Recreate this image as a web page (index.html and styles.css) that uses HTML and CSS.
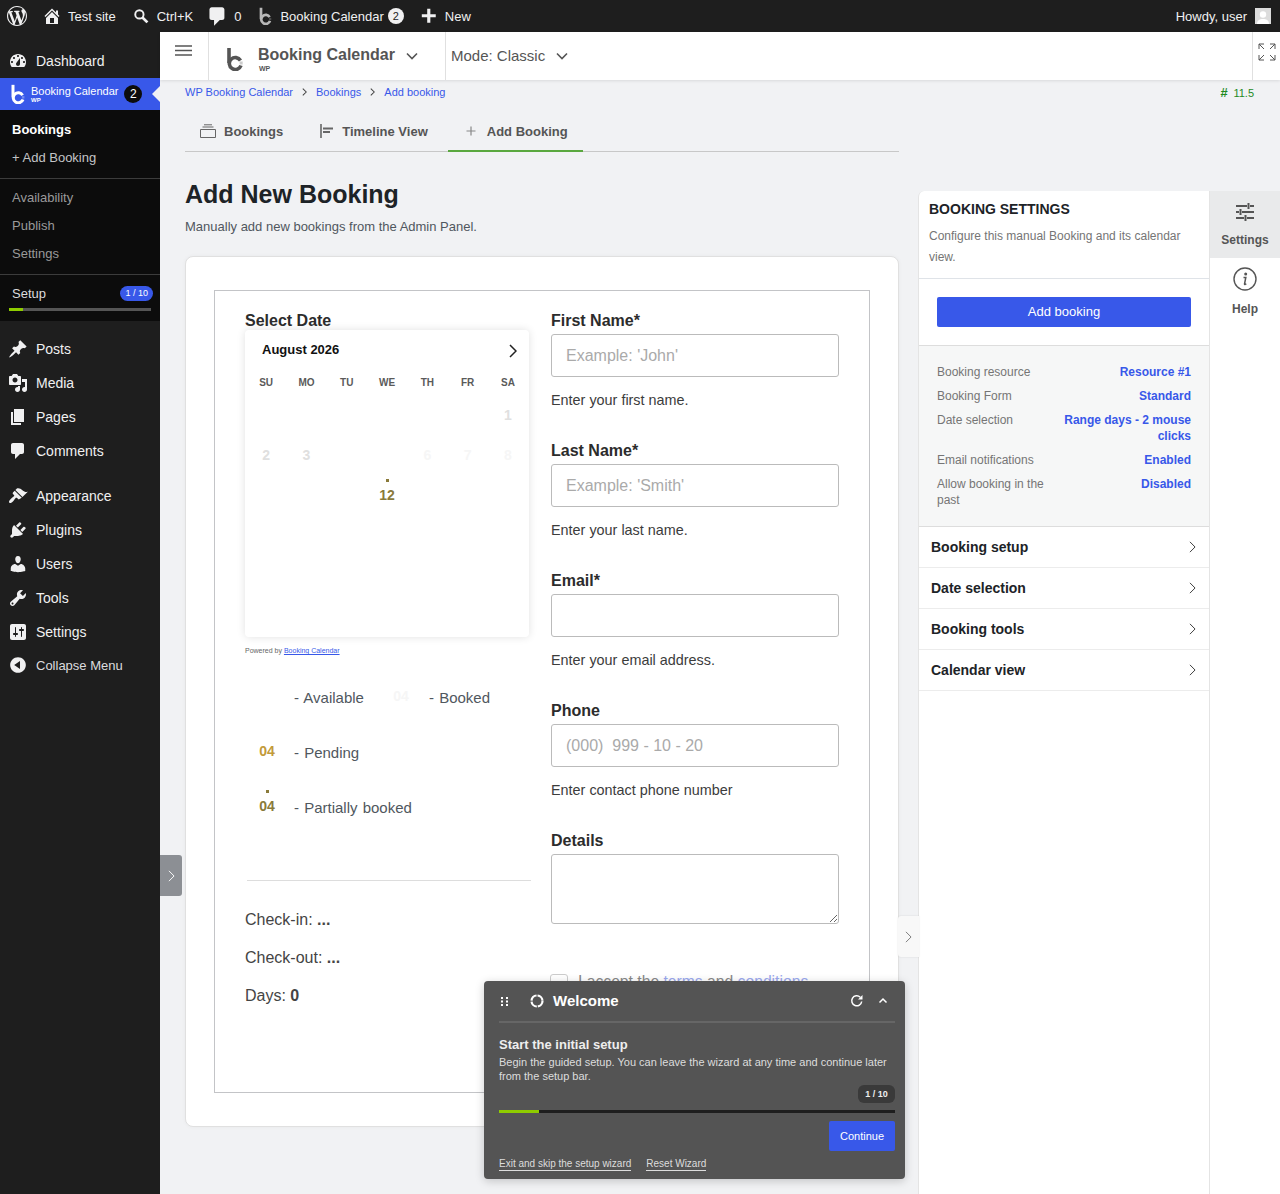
FILE: index.html
```html
<!DOCTYPE html>
<html lang="en">
  <head>
    <meta charset="UTF-8" />
    <meta name="viewport" content="width=device-width, initial-scale=1.0" />
    <title>Add New Booking</title>
    <link rel="stylesheet" href="styles.css">
  </head>
  <body>
    <!-- Shared icons -->
    <svg class="icon-defs" aria-hidden="true">
      <symbol id="i-bc" viewBox="0 0 16 24">
        <path d="M2 1V16" fill="none" stroke="currentColor" stroke-width="3.6"/>
        <path d="M14 18.500A6 6 0 1 1 13.500 13.500" fill="none" stroke="currentColor" stroke-width="3.6"/>
        <path d="M14.200 14.500v3" fill="none" stroke="currentColor" stroke-width="3" opacity="0.3"/>
      </symbol>
      <symbol id="i-comment" viewBox="0 0 20 20">
        <path d="M5 2h9c1.1 0 2 .9 2 2v7c0 1.1-.9 2-2 2h-2l-5 5v-5H5c-1.1 0-2-.9-2-2V4c0-1.1.9-2 2-2z"/>
      </symbol>
      <symbol id="i-right" viewBox="0 0 8 14">
        <path d="M1 1l6 6-6 6" fill="none" stroke="currentColor"/>
      </symbol>
      <symbol id="i-down" viewBox="0 0 12 8">
        <path d="M1 1.500l5 5 5-5" fill="none" stroke="currentColor" stroke-width="1.6"/>
      </symbol>
    </svg>

    <!-- Admin bar -->
    <header class="admin-bar">
      <div class="bar-group">
        <svg class="bar-logo" viewBox="0 0 20 20"><path d="M20 10c0-5.51-4.49-10-10-10C4.48 0 0 4.49 0 10c0 5.52 4.48 10 10 10 5.51 0 10-4.48 10-10zM7.78 15.37L4.37 6.22c.55-.02 1.17-.08 1.17-.08.5-.06.44-1.13-.06-1.11 0 0-1.45.11-2.37.11-.18 0-.37 0-.58-.01C4.12 2.69 6.87 1.02 10 1.02c2.33 0 4.45.87 6.05 2.34-.68-.11-1.65.39-1.65 1.58 0 .74.45 1.36.9 2.1.35.61.55 1.36.55 2.46 0 1.49-1.4 5-1.4 5l-3.03-8.37c.54-.02.82-.17.82-.17.5-.05.44-1.25-.06-1.22 0 0-1.44.12-2.38.12-.87 0-2.33-.12-2.33-.12-.5-.03-.56 1.2-.06 1.22l.92.08 1.26 3.41zM17.41 10c.24-.64.74-1.87.43-4.25.7 1.29 1.05 2.71 1.05 4.25 0 3.29-1.73 6.24-4.4 7.78.97-2.59 1.94-5.2 2.92-7.78zM6.1 18.09C3.12 16.65 1.11 13.53 1.11 10c0-1.3.23-2.48.72-3.59C3.25 10.3 4.67 14.2 6.1 18.09zm4.03-6.63l2.58 6.98c-.86.29-1.76.45-2.71.45-.79 0-1.57-.11-2.29-.33.81-2.38 1.62-4.74 2.42-7.1z"/></svg>
        <span class="bar-item">
          <svg class="bar-icon" viewBox="0 0 20 20"><path d="M16 8.5l1.53 1.53-1.06 1.06L10 4.62l-6.47 6.47-1.06-1.06L10 2.500l4 4v-2h2v4zm-6-2.46l6 5.99V18H4v-5.97zM12 17v-5H8v5h4z"/></svg>
          Test site
        </span>
        <span class="bar-item">
          <svg class="bar-search" viewBox="0 0 20 20"><circle cx="8" cy="8" r="5.200" fill="none" stroke="currentColor" stroke-width="2.400"/><path d="M11.500 11.500L18 18" stroke="currentColor" stroke-width="3.400"/></svg>
          Ctrl+K
        </span>
        <span class="bar-item">
          <svg class="bar-icon bar-icon-comment"><use href="#i-comment"/></svg>
          <span>0</span>
        </span>
        <span class="bar-item">
          <svg class="bar-bc"><use href="#i-bc"/></svg>
          <span class="bar-tight">Booking Calendar <b class="bar-badge">2</b></span>
        </span>
        <span class="bar-item">
          <svg class="bar-icon bar-icon-plus" viewBox="0 0 20 20"><path d="M17.500 8v3.500h-6v6H8v-6H2V8h6V2h3.500v6h6z"/></svg>
          New
        </span>
      </div>
      <div class="bar-item bar-user">
        Howdy, user
        <svg class="avatar" viewBox="0 0 16 16"><rect width="16" height="16" fill="#dcdcdc"/><circle cx="8" cy="6.500" r="3.200" fill="#fff"/><path d="M2 16c0-4 3-5 6-5s6 1 6 5z" fill="#fff"/></svg>
      </div>
    </header>

    <div class="page">
      <!-- Sidebar -->
      <nav class="sidebar">
        <a class="menu-item">
          <svg viewBox="0 0 20 20"><path fill-rule="evenodd" d="M3.76 16h12.48c1.1-1.37 1.76-3.11 1.76-5 0-4.42-3.58-8-8-8s-8 3.58-8 8c0 1.89.66 3.63 1.76 5zM10 4c.55 0 1 .45 1 1s-.45 1-1 1-1-.45-1-1 .45-1 1-1zM6 6c.55 0 1 .45 1 1s-.45 1-1 1-1-.45-1-1 .45-1 1-1zm8 0c.55 0 1 .45 1 1s-.45 1-1 1-1-.45-1-1 .45-1 1-1zm-5.37 5.55L12 7v6c0 1.1-.9 2-2 2s-2-.9-2-2c0-.57.24-1.08.63-1.45zM4 10c.55 0 1 .45 1 1s-.45 1-1 1-1-.45-1-1 .45-1 1-1zm12 0c.55 0 1 .45 1 1s-.45 1-1 1-1-.45-1-1 .45-1 1-1z"/></svg>
          Dashboard
        </a>
        <a class="menu-active">
          <svg class="active-logo"><use href="#i-bc"/></svg>
          <span class="active-name">Booking Calendar<small>WP</small></span>
          <b class="active-badge">2</b>
        </a>
        <div class="submenu">
          <a class="sub-item sub-strong">Bookings</a>
          <a class="sub-item">+ Add Booking</a>
          <div class="sub-group">
            <a class="sub-item sub-dim">Availability</a>
            <a class="sub-item sub-dim">Publish</a>
            <a class="sub-item sub-dim">Settings</a>
          </div>
          <div class="sub-setup">
            <div class="setup-row"><span>Setup</span><b class="setup-badge">1 / 10</b></div>
            <div class="setup-track"><div class="setup-fill"></div></div>
          </div>
        </div>

        <div class="menu-group">
          <a class="menu-item">
            <svg viewBox="0 0 20 20"><path d="M10.44 3.02l1.82-1.82 6.36 6.35-1.83 1.82c-1.05-.68-2.48-.57-3.41.36l-.75.75c-.92.93-1.04 2.35-.35 3.41l-1.83 1.82-2.41-2.41-2.8 2.79c-.42.42-3.38 2.71-3.8 2.29s1.86-3.39 2.28-3.81l2.79-2.79L4.1 9.36l1.83-1.82c1.05.69 2.48.57 3.4-.36l.75-.75c.93-.92 1.05-2.35.36-3.41z"/></svg>
            Posts
          </a>
          <a class="menu-item">
            <svg viewBox="0 0 20 20"><path fill-rule="evenodd" d="M13 11V4c0-.55-.45-1-1-1h-1.67L9 1H5L3.67 3H2c-.55 0-1 .45-1 1v7c0 .55.45 1 1 1h10c.55 0 1-.45 1-1zM7 4.5c1.38 0 2.5 1.12 2.5 2.5S8.38 9.5 7 9.5 4.5 8.38 4.5 7 5.62 4.5 7 4.5zM14 6h5v10.5c0 1.38-1.12 2.5-2.5 2.5S14 17.88 14 16.5s1.12-2.5 2.5-2.5c.17 0 .34.02.5.05V9h-3V6zm-4 8.05V13h2v3.5c0 1.38-1.12 2.5-2.5 2.5S7 17.88 7 16.5 8.12 14 9.5 14c.17 0 .34.02.5.05z"/></svg>
            Media
          </a>
          <a class="menu-item">
            <svg viewBox="0 0 20 20"><path d="M6 15V2h10v13H6zm-1 1h8v2H3V5h2v11z"/></svg>
            Pages
          </a>
          <a class="menu-item">
            <svg><use href="#i-comment"/></svg>
            Comments
          </a>
        </div>

        <div class="menu-group">
          <a class="menu-item">
            <svg viewBox="0 0 20 20"><path d="M14.48 11.06L7.41 3.99l1.5-1.5c.5-.56 2.3-.47 3.51.32 1.21.8 1.43 1.28 2.91 2.1 1.18.64 2.45 1.26 4.45.85zm-.71.71L6.7 4.7 4.93 6.47c-.39.39-.39 1.02 0 1.41l1.06 1.06c.39.39.39 1.03 0 1.42-.6.6-1.43 1.11-2.21 1.69-.35.26-.7.53-1.01.84-1.34 1.34-2.37 2.78-1.39 3.76.98.98 2.41-.05 3.75-1.39.31-.31.58-.66.84-1.01.58-.78 1.09-1.61 1.69-2.21.39-.39 1.02-.39 1.41 0l1.06 1.06c.39.39 1.02.39 1.41 0z"/></svg>
            Appearance
          </a>
          <a class="menu-item">
            <svg viewBox="0 0 20 20"><path d="M13.11 4.36L9.87 7.6 8 5.73l3.24-3.24c.35-.34 1.05-.2 1.56.32.52.51.66 1.21.31 1.55zm-8 1.77l.91-1.12 9.01 9.01-1.19.84c-.71.71-2.63 1.16-3.82 1.16H6.14L4.9 17.26c-.59.59-1.54.59-2.12 0-.59-.58-.59-1.53 0-2.12l1.24-1.24v-3.88c0-1.13.4-3.19 1.09-3.89zm7.26 3.97l3.24-3.24c.34-.35 1.04-.21 1.55.31.52.51.66 1.21.31 1.55l-3.24 3.25z"/></svg>
            Plugins
          </a>
          <a class="menu-item">
            <svg viewBox="0 0 20 20"><path d="M10 9.25c-2.27 0-2.73-3.44-2.73-3.44C7 4.02 7.82 2 9.97 2c2.16 0 2.98 2.02 2.71 3.81 0 0-.41 3.44-2.68 3.44zm0 2.57L12.72 10c2.39 0 4.52 2.33 4.52 4.53v2.49s-3.65 1.13-7.24 1.13c-3.65 0-7.24-1.13-7.24-1.13v-2.49c0-2.25 1.94-4.48 4.47-4.48z"/></svg>
            Users
          </a>
          <a class="menu-item">
            <svg viewBox="0 0 20 20"><path fill-rule="evenodd" d="M16.68 9.77c-1.34 1.34-3.3 1.67-4.95.99l-5.41 6.52c-.99.99-2.59.99-3.58 0s-.99-2.59 0-3.57l6.52-5.42c-.68-1.65-.35-3.61.99-4.95 1.28-1.28 3.12-1.62 4.72-1.06l-2.89 2.89 2.82 2.82 2.86-2.87c.53 1.58.18 3.39-1.08 4.65zM3.81 16.21c.4.39 1.04.39 1.43 0 .4-.4.4-1.04 0-1.43-.39-.4-1.03-.4-1.43 0-.39.39-.39 1.03 0 1.43z"/></svg>
            Tools
          </a>
          <a class="menu-item">
            <svg viewBox="0 0 20 20"><path fill-rule="evenodd" d="M18 16V4c0-1.1-.9-2-2-2H4c-1.1 0-2 .9-2 2v12c0 1.1.9 2 2 2h12c1.1 0 2-.9 2-2zM8 11h1c.55 0 1 .45 1 1s-.45 1-1 1H8v1.5c0 .28-.22.5-.5.5s-.5-.22-.5-.5V13H6c-.55 0-1-.45-1-1s.45-1 1-1h1V5.5c0-.28.22-.5.5-.5s.5.22.5.5V11zm5-2h-1c-.55 0-1-.45-1-1s.45-1 1-1h1V5.5c0-.28.22-.5.5-.5s.5.22.5.5V7h1c.55 0 1 .45 1 1s-.45 1-1 1h-1v5.5c0 .28-.22.5-.5.5s-.5-.22-.5-.5V9z"/></svg>
            Settings
          </a>
          <a class="menu-item menu-collapse">
            <svg viewBox="0 0 20 20"><path fill-rule="evenodd" d="M10 2.16c4.33 0 7.84 3.51 7.84 7.84s-3.51 7.84-7.84 7.84S2.16 14.33 2.16 10 5.71 2.16 10 2.16zm2 11.72V6.12L6.18 9.97z"/></svg>
            Collapse Menu
          </a>
        </div>
      </nav>

      <main class="main">
        <!-- Top bar -->
        <div class="topbar">
          <div class="top-burger">
            <svg viewBox="0 0 17 11"><path d="M0 1h17M0 5.500h17M0 10h17" stroke="#555" stroke-width="1.600"/></svg>
          </div>
          <div class="top-brand">
            <svg class="top-logo"><use href="#i-bc"/></svg>
            <div class="top-title">Booking Calendar<small>WP</small></div>
            <svg class="top-caret"><use href="#i-down"/></svg>
          </div>
          <div class="top-mode">
            <span class="mode-label">Mode: Classic</span>
            <svg class="top-caret"><use href="#i-down"/></svg>
          </div>
          <div class="top-expand">
            <svg viewBox="0 0 18 18"><path d="M1 6V1h5M1 1l5 5M12 1h5v5M17 1l-5 5M1 12v5h5M1 17l5-5M17 12v5h-5M17 17l-5-5" fill="none" stroke="#555" stroke-width="1"/></svg>
          </div>
        </div>

        <div class="crumbs">
          <div class="crumb-links">
            <a>WP Booking Calendar</a>
            <svg class="crumb-sep"><use href="#i-right"/></svg>
            <a>Bookings</a>
            <svg class="crumb-sep"><use href="#i-right"/></svg>
            <a>Add booking</a>
          </div>
          <div class="version"><i>#</i>11.5</div>
        </div>

        <div class="columns">
          <section class="content">
            <div class="tabs">
              <a class="tab">
                <svg class="tab-icon" viewBox="0 0 16 14"><path d="M.5 5.500h15v8H.5zM2.500 3h11M4 .8h8" fill="none" stroke="#666" stroke-width="1"/></svg>
                Bookings
              </a>
              <a class="tab">
                <svg class="tab-icon tab-icon-small" viewBox="0 0 14 14"><path d="M1 0v14" stroke="#666" stroke-width="1.600"/><path d="M3 4.500h10M3 8h7" stroke="#666" stroke-width="1.800"/></svg>
                Timeline View
              </a>
              <a class="tab tab-active">
                <svg class="tab-icon" viewBox="0 0 16 14"><path d="M8 2.500v9M3.500 7h9" stroke="#888" stroke-width="1.200"/></svg>
                Add Booking
              </a>
            </div>

            <h1>Add New Booking</h1>
            <p class="lead">Manually add new bookings from the Admin Panel.</p>

            <div class="card">
              <div class="form-box">
                <div class="form-left">
                  <div class="field-label">Select Date</div>
                  <div class="calendar">
                    <div class="cal-head">
                      <span>August 2026</span>
                      <svg class="cal-next" viewBox="0 0 8 14"><path d="M1 1l6 6-6 6" fill="none" stroke="#222" stroke-width="1.500"/></svg>
                    </div>
                    <div class="cal-grid">
                      <span class="cal-dow">SU</span><span class="cal-dow">MO</span><span class="cal-dow">TU</span><span class="cal-dow">WE</span><span class="cal-dow">TH</span><span class="cal-dow">FR</span><span class="cal-dow">SA</span>
                      <span></span><span></span><span></span><span></span><span></span><span></span><span class="day-off">1</span>
                      <span class="day-off">2</span><span class="day-off">3</span><span></span><span></span><span class="day-faint">6</span><span class="day-faint">7</span><span class="day-faint">8</span>
                      <span></span><span></span><span></span><span class="day-part">12</span><span></span><span></span><span></span>
                    </div>
                  </div>
                  <div class="powered">Powered by <a>Booking Calendar</a></div>

                  <div class="legend">
                    <div class="legend-item legend-first"><span class="legend-num"></span>- Available</div>
                    <div class="legend-item legend-second"><span class="legend-num num-booked">04</span>- Booked</div>
                    <div class="legend-item"><span class="legend-num num-pending">04</span>- Pending</div>
                    <div class="legend-item"><span class="legend-num day-part">04</span>- Partially booked</div>
                  </div>

                  <div class="summary">
                    <p>Check-in: <b>...</b></p>
                    <p>Check-out: <b>...</b></p>
                    <p>Days: <b>0</b></p>
                  </div>
                </div>

                <div class="form-right">
                  <div class="field">
                    <label class="field-label">First Name*</label>
                    <input class="text-input" type="text" placeholder="Example: 'John'" />
                    <p class="field-help">Enter your first name.</p>
                  </div>
                  <div class="field">
                    <label class="field-label">Last Name*</label>
                    <input class="text-input" type="text" placeholder="Example: 'Smith'" />
                    <p class="field-help">Enter your last name.</p>
                  </div>
                  <div class="field">
                    <label class="field-label">Email*</label>
                    <input class="text-input" type="text" />
                    <p class="field-help">Enter your email address.</p>
                  </div>
                  <div class="field">
                    <label class="field-label">Phone</label>
                    <input class="text-input" type="text" placeholder="(000)  999 - 10 - 20" />
                    <p class="field-help">Enter contact phone number</p>
                  </div>
                  <div class="field">
                    <label class="field-label">Details</label>
                    <textarea class="text-area"></textarea>
                  </div>
                  <label class="terms">
                    <input class="terms-check" type="checkbox" />
                    <span>I accept the <a>terms</a> and <a>conditions</a></span>
                  </label>
                </div>
              </div>
            </div>
          </section>

          <aside class="panel">
            <div class="panel-main">
              <div class="panel-head">
                <h2>BOOKING SETTINGS</h2>
                <p>Configure this manual Booking and its calendar view.</p>
              </div>
              <div class="panel-action">
                <button class="btn-add" type="button">Add booking</button>
              </div>
              <div class="panel-info">
                <div class="info-row"><span>Booking resource</span><b>Resource #1</b></div>
                <div class="info-row"><span>Booking Form</span><b>Standard</b></div>
                <div class="info-row"><span>Date selection</span><b>Range days - 2 mouse clicks</b></div>
                <div class="info-row"><span>Email notifications</span><b>Enabled</b></div>
                <div class="info-row"><span>Allow booking in the past</span><b>Disabled</b></div>
              </div>
              <div class="acc-row">Booking setup<svg><use href="#i-right"/></svg></div>
              <div class="acc-row">Date selection<svg><use href="#i-right"/></svg></div>
              <div class="acc-row">Booking tools<svg><use href="#i-right"/></svg></div>
              <div class="acc-row">Calendar view<svg><use href="#i-right"/></svg></div>
            </div>
            <div class="panel-tabs">
              <a class="side-tab side-tab-active">
                <svg viewBox="0 0 18 18"><path d="M0 3h11M14 3h4M0 9h3M6 9h12M0 15h8M11 15h7M12.500 0v6M4.500 6v6M9.500 12v6" fill="none" stroke="#555" stroke-width="2"/></svg>
                Settings
              </a>
              <a class="side-tab">
                <svg class="info-icon" viewBox="0 0 24 24"><circle cx="12" cy="12" r="11" fill="none" stroke="#555" stroke-width="1.400"/><circle cx="12.700" cy="7" r="1.500" fill="#555"/><path d="M10.500 10.500h2.300l-1.300 6.500c0 .8.900.6 1.800-.2" fill="none" stroke="#555" stroke-width="1.500"/></svg>
                Help
              </a>
            </div>
          </aside>
        </div>
      </main>
    </div>

    <!-- Floating parts -->
    <a class="handle-left"><svg><use href="#i-right"/></svg></a>
    <a class="handle-right"><svg><use href="#i-right"/></svg></a>

    <div class="wizard">
      <div class="wizard-head">
        <svg class="wizard-drag" viewBox="0 0 7 9"><path d="M0 0h2v2H0zM5 0h2v2H5zM0 3.500h2v2H0zM5 3.500h2v2H5zM0 7h2v2H0zM5 7h2v2H5z" fill="#fff"/></svg>
        <svg class="wizard-ring" viewBox="0 0 14 14"><circle cx="7" cy="7" r="5.500" fill="none" stroke="#fff" stroke-width="2.200" stroke-dasharray="7.600 1"/></svg>
        <span class="wizard-title">Welcome</span>
        <svg class="wizard-tool" viewBox="0 0 14 14"><path d="M11.700 7.500A5 5 0 1 1 10.200 3.200" fill="none" stroke="#fff" stroke-width="1.500"/><path d="M12.500 1v4.500H8z" fill="#fff"/></svg>
        <svg class="wizard-tool" viewBox="0 0 14 14"><path d="M3.500 8.500L7 5l3.500 3.500" fill="none" stroke="#fff" stroke-width="1.500"/></svg>
      </div>
      <h3>Start the initial setup</h3>
      <p class="wizard-text">Begin the guided setup. You can leave the wizard at any time and continue later from the setup bar.</p>
      <div class="wizard-count"><b>1 / 10</b></div>
      <div class="wizard-track"><div class="wizard-fill"></div></div>
      <div class="wizard-action"><button class="btn-continue" type="button">Continue</button></div>
      <div class="wizard-links"><a>Exit and skip the setup wizard</a><a>Reset Wizard</a></div>
    </div>
  </body>
</html>
```

FILE: styles.css
```css
* {
  box-sizing: border-box;
}

html,
body {
  height: 100%;
}

body {
  margin: 0;
  display: flex;
  flex-direction: column;
  overflow: hidden;
  background-color: #f1f2f4;
  font-family: "Liberation Sans", Arial, sans-serif;
  font-size: 13px;
  color: #3c434a;
}

.icon-defs {
  display: none;
}

/* Admin bar */
.admin-bar {
  flex: none;
  display: flex;
  justify-content: space-between;
  align-items: center;
  height: 32px;
  padding: 0 9px 0 7px;
  background-color: #1e1e1e;
  color: #f0f0f1;
}

.bar-group {
  display: flex;
  align-items: center;
  gap: 17px;
}

.bar-item {
  display: flex;
  align-items: center;
  gap: 8px;
}

.bar-logo {
  width: 20px;
  height: 20px;
  fill: #f0f0f1;
}

.bar-icon {
  width: 20px;
  height: 20px;
  margin: 0 -2px;
  fill: currentColor;
}

.bar-search {
  width: 16px;
  height: 16px;
}

.bar-icon-comment {
  width: 23px;
  height: 23px;
  margin: 0 -3px 0 -4px;
}

.bar-icon-plus {
  width: 18px;
  height: 18px;
  margin: 0 -1px;
}

.bar-bc {
  width: 13px;
  height: 18px;
  margin-left: 1px;
  color: #b8b8b8;
}

.bar-tight {
  display: flex;
  align-items: center;
  gap: 4px;
}

.bar-badge {
  width: 16px;
  height: 16px;
  border-radius: 50%;
  background-color: #f0f0f1;
  color: #1e1e1e;
  font-size: 11px;
  font-weight: normal;
  line-height: 16px;
  text-align: center;
}

.avatar {
  width: 16px;
  height: 16px;
}

/* Page frame */
.page {
  flex: 1;
  display: flex;
  min-height: 0;
}

.sidebar {
  flex: none;
  width: 160px;
  padding-top: 12px;
  background-color: #1e1e1e;
  color: #f0f0f1;
}

.menu-item {
  display: flex;
  align-items: center;
  gap: 8px;
  height: 34px;
  padding-left: 8px;
  font-size: 14px;
}

.menu-item svg {
  flex: none;
  width: 20px;
  height: 20px;
  fill: #f0f0f1;
}

.menu-collapse {
  height: 32px;
  font-size: 13px;
  color: #dcdcde;
}

.menu-active {
  position: relative;
  display: flex;
  align-items: center;
  height: 32px;
  padding-left: 11px;
  background-color: #3858e9;
  color: #fff;
}

.menu-active::after {
  content: "";
  position: absolute;
  right: 0;
  top: 8px;
  border: 8px solid transparent;
  border-left-width: 0;
  border-right-color: #f1f2f4;
}

.active-logo {
  flex: none;
  width: 14px;
  height: 20px;
  color: #fff;
}

.active-name {
  display: block;
  margin-left: 6px;
  font-size: 11px;
  line-height: 12px;
}

.active-name small {
  display: block;
  font-size: 6px;
  font-weight: bold;
  line-height: 6px;
}

.active-badge {
  flex: none;
  width: 18px;
  height: 18px;
  margin-left: 6px;
  border-radius: 50%;
  background-color: #0c0c0c;
  font-size: 12px;
  font-weight: normal;
  line-height: 18px;
  text-align: center;
}

.submenu {
  height: 211px;
  background-color: #0c0c0c;
  padding-top: 6px;
}

.sub-item {
  display: block;
  height: 28px;
  padding-left: 12px;
  line-height: 28px;
  color: #c3c4c7;
}

.sub-strong {
  color: #fff;
  font-weight: bold;
}

.sub-group {
  margin-top: 6px;
  padding-top: 5px;
  border-top: 1px solid #3c3c3c;
}

.sub-dim {
  color: #9a9a9a;
}

.sub-setup {
  margin-top: 6px;
  padding-top: 11px;
  border-top: 1px solid #3c3c3c;
}

.setup-row {
  display: flex;
  justify-content: space-between;
  align-items: center;
  padding: 0 7px 0 12px;
  color: #dcdcde;
}

.setup-badge {
  height: 15px;
  padding: 0 5px;
  border-radius: 8px;
  background-color: #3858e9;
  color: #fff;
  font-size: 9px;
  font-weight: normal;
  line-height: 15px;
}

.setup-track {
  height: 3px;
  margin: 7px 9px 0;
  background-color: #555;
}

.setup-fill {
  width: 14px;
  height: 100%;
  background-color: #8ecc00;
}

.menu-group {
  margin-top: 11px;
}

/* Main area */
.main {
  flex: 1;
  min-width: 0;
  display: flex;
  flex-direction: column;
}

.topbar {
  flex: none;
  display: flex;
  height: 48px;
  background-color: #fff;
  box-shadow: 0 1px 3px rgba(0, 0, 0, 0.1);
}

.top-burger {
  flex: none;
  width: 49px;
  padding: 13px 0 0 15px;
  border-right: 1px solid #e0e0e0;
}

.top-burger svg {
  display: block;
  width: 17px;
  height: 11px;
}

.top-brand {
  flex: none;
  display: flex;
  align-items: center;
  width: 237px;
  padding-left: 18px;
  border-right: 1px solid #e0e0e0;
}

.top-logo {
  flex: none;
  width: 16px;
  height: 24px;
  margin-top: 6px;
  color: #555;
}

.top-title {
  margin: 6px 0 0 15px;
  font-size: 16px;
  font-weight: bold;
  line-height: 18px;
  color: #555;
}

.top-title small {
  display: block;
  margin: 1px 0 0 1px;
  font-size: 7px;
  line-height: 7px;
}

.top-caret {
  flex: none;
  width: 12px;
  height: 8px;
  margin-left: 11px;
  color: #555;
}

.top-mode {
  display: flex;
  align-items: center;
  padding-left: 5px;
  font-size: 15px;
  color: #555;
}

.mode-label {
  margin-top: -2px;
}

.top-expand {
  margin-left: auto;
  width: 28px;
  padding: 11px 0 0 5px;
  border-left: 1px solid #e0e0e0;
}

.top-expand svg {
  display: block;
  width: 18px;
  height: 18px;
}

.crumbs {
  flex: none;
  display: flex;
  justify-content: space-between;
  align-items: center;
  height: 24px;
  padding: 0 26px 0 25px;
  font-size: 11px;
  color: #3858e9;
}

.crumb-links {
  display: flex;
  align-items: center;
  gap: 8px;
}

.crumb-sep {
  width: 5px;
  height: 8px;
  margin: 0 1px;
  color: #444;
  stroke-width: 1.8;
}

.version {
  color: #1f8a1f;
}

.version i {
  margin-right: 6px;
  font-size: 13px;
  font-weight: bold;
}

.columns {
  flex: 1;
  display: flex;
  min-height: 0;
}

.content {
  flex: none;
  width: 758px;
  padding: 6px 19px 0 25px;
}

/* Tabs */
.tabs {
  display: flex;
  gap: 7px;
  height: 42px;
  border-bottom: 1px solid #c8c8c8;
}

.tab {
  display: flex;
  align-items: center;
  gap: 8px;
  height: 42px;
  padding: 0 15px;
  font-weight: bold;
  color: #555;
}

.tab-icon {
  width: 16px;
  height: 14px;
}

.tab-icon-small {
  width: 14px;
}

.tab-active {
  margin-left: -2px;
  box-shadow: inset 0 -2px 0 #5aa83f;
}

h1 {
  margin: 28px 0 0;
  font-size: 25px;
  line-height: 28px;
  color: #1d2327;
}

.lead {
  margin: 10px 0 0;
  line-height: 18px;
  color: #50575e;
}

/* Form card */
.card {
  margin-top: 20px;
  padding: 33px 28px;
  border: 1px solid #e0e0e0;
  border-radius: 8px;
  background-color: #fff;
  box-shadow: 0 0 4px rgba(0, 0, 0, 0.04);
}

.form-box {
  display: grid;
  grid-template-columns: 286px 288px;
  column-gap: 20px;
  height: 803px;
  padding: 20px 0 0 30px;
  border: 1px solid #c3c4c7;
}

.field-label {
  display: block;
  font-size: 16px;
  font-weight: bold;
  line-height: 20px;
  color: #2c2c2c;
}

.calendar {
  width: 284px;
  height: 307px;
  margin-top: -1px;
  border-radius: 4px;
  background-color: #fff;
  box-shadow: 0 0 8px rgba(0, 0, 0, 0.12);
}

.cal-head {
  display: flex;
  justify-content: space-between;
  align-items: center;
  height: 38px;
  margin-bottom: 3px;
  padding: 0 12px 0 17px;
  font-size: 13px;
  font-weight: bold;
  color: #111;
}

.cal-next {
  width: 8px;
  height: 14px;
  margin-top: 4px;
}

.cal-grid {
  display: grid;
  grid-template-columns: repeat(7, 40.3px);
  grid-template-rows: 24px;
  grid-auto-rows: 40px;
  padding-left: 1px;
  font-size: 14px;
  font-weight: bold;
  text-align: center;
}

.cal-grid span {
  line-height: 40px;
}

.cal-grid .cal-dow {
  height: 24px;
  line-height: 24px;
  font-size: 10px;
  color: #5a5a5a;
}

.day-off {
  color: #e0e0e0;
}

.day-faint {
  color: #f6f6f6;
}

.day-part {
  position: relative;
  color: #8a7a3a;
}

.day-part::before {
  content: "";
  position: absolute;
  left: 50%;
  top: 4px;
  width: 3px;
  height: 3px;
  margin-left: -1px;
  background-color: #8a7a3a;
}

.powered {
  margin-top: 10px;
  font-size: 7px;
  line-height: 8px;
  color: #666;
}

.powered a {
  color: #3858e9;
  text-decoration: underline;
}

/* Legend */
.legend {
  display: flex;
  flex-wrap: wrap;
  margin-top: 15px;
  font-size: 15px;
  word-spacing: 1px;
  color: #50575e;
}

.legend-item {
  display: flex;
  align-items: center;
  width: 100%;
  height: 55px;
}

.legend-first {
  width: 134px;
}

.legend-second {
  width: 150px;
}

.legend-num {
  flex: none;
  width: 44px;
  margin-right: 5px;
  margin-top: -4px;
  font-size: 14px;
  font-weight: bold;
  line-height: 16px;
  text-align: center;
}

.legend-second .legend-num {
  margin-right: 6px;
}

.legend-num.day-part::before {
  top: -8px;
}

.num-booked {
  color: #f6f6f6;
}

.num-pending {
  color: #c29a3a;
}

.summary {
  margin: 45px 0 0 2px;
  padding-top: 20px;
  border-top: 1px solid #ddd;
  font-size: 16px;
  color: #444;
}

.summary p {
  margin: 0 0 0 -2px;
  height: 38px;
  line-height: 38px;
}

/* Fields */
.field {
  height: 130px;
}

.text-input {
  display: block;
  width: 288px;
  height: 43px;
  margin-top: 3px;
  padding: 0 14px;
  border: 1px solid #bbb;
  border-radius: 3px;
  background-color: #fff;
  font-family: inherit;
  font-size: 16px;
}

.text-input::placeholder {
  color: #aaa;
  opacity: 1;
}

.field-help {
  margin: 13px 0 0;
  font-size: 14.4px;
  line-height: 20px;
  color: #3c3c3c;
}

.text-area {
  display: block;
  width: 288px;
  height: 70px;
  margin-top: 3px;
  border: 1px solid #bbb;
  border-radius: 3px;
}

.terms {
  display: flex;
  gap: 10px;
  margin: 13px 0 0 -1px;
  font-size: 15.7px;
  line-height: 18px;
  color: #888;
}

.terms span {
  margin-top: -1px;
}

.terms a {
  color: #9aa8ee;
}

.terms-check {
  appearance: none;
  flex: none;
  width: 18px;
  height: 18px;
  margin: 0;
  border: 1px solid #ccc;
  border-radius: 3px;
}

/* Settings panel */
.panel {
  flex: 1;
  display: flex;
  margin-top: 87px;
}

.panel-main {
  flex: none;
  width: 292px;
  border-left: 1px solid #e4e4e4;
  border-right: 1px solid #e4e4e4;
  border-radius: 6px 0 0 0;
  background-color: #fff;
}

.panel-head {
  height: 88px;
  padding: 10px 10px 0;
  border-bottom: 1px solid #dfe3e8;
}

.panel-head h2 {
  margin: 0;
  font-size: 14px;
  line-height: 16px;
  color: #1d2327;
}

.panel-head p {
  margin: 9px 0 0;
  font-size: 12px;
  line-height: 21px;
  color: #757575;
}

.panel-action {
  height: 66px;
  padding: 18px 18px 0;
}

.btn-add {
  display: block;
  width: 254px;
  height: 30px;
  padding-bottom: 3px;
  border: none;
  border-radius: 2px;
  background-color: #3858e9;
  color: #fff;
  font-family: inherit;
  font-size: 13px;
}

.panel-info {
  padding: 18px 18px 10px;
  border-top: 1px solid #ddd;
  border-bottom: 1px solid #ddd;
  background-color: #f6f7f7;
}

.info-row {
  display: grid;
  grid-template-columns: 122px 132px;
  margin-bottom: 8px;
  font-size: 12px;
  line-height: 16px;
  color: #757575;
}

.info-row b {
  text-align: right;
  color: #3858e9;
}

.acc-row {
  display: flex;
  justify-content: space-between;
  align-items: center;
  height: 41px;
  padding: 0 13px 0 12px;
  border-bottom: 1px solid #ececec;
  font-size: 14px;
  font-weight: bold;
  color: #1d2327;
}

.acc-row svg {
  width: 7px;
  height: 12px;
  color: #333;
  stroke-width: 1.1;
}

.panel-tabs {
  flex: 1;
  background-color: #fff;
}

.side-tab {
  display: flex;
  flex-direction: column;
  align-items: center;
  height: 67px;
  padding-top: 12px;
  font-size: 12px;
  font-weight: bold;
  color: #555;
}

.side-tab svg {
  width: 18px;
  height: 18px;
  margin-bottom: 12px;
}

.side-tab .info-icon {
  width: 24px;
  height: 24px;
  margin: -3px 0 11px;
}

.side-tab-active {
  background-color: #e9eaeb;
}

/* Floating handles */
.handle-left {
  position: absolute;
  left: 160px;
  top: 855px;
  display: flex;
  align-items: center;
  justify-content: center;
  width: 22px;
  height: 41px;
  border-radius: 0 3px 3px 0;
  background-color: #8c8f94;
  color: #fff;
}

.handle-right {
  position: absolute;
  left: 898px;
  top: 916px;
  display: flex;
  align-items: center;
  justify-content: center;
  width: 21px;
  height: 41px;
  border-radius: 3px 0 0 3px;
  background-color: #f8f8f8;
  color: #777;
  box-shadow: 0 0 2px rgba(0, 0, 0, 0.12);
}

.handle-left svg,
.handle-right svg {
  width: 7px;
  height: 12px;
  stroke-width: 1.1;
}

/* Setup wizard */
.wizard {
  position: absolute;
  left: 484px;
  top: 981px;
  width: 421px;
  height: 198px;
  padding: 0 10px 0 15px;
  border-radius: 4px;
  background-color: #545454;
  color: #ddd;
  box-shadow: 0 2px 10px rgba(0, 0, 0, 0.2);
}

.wizard-head {
  display: flex;
  align-items: center;
  height: 42px;
  border-bottom: 2px solid #666;
  color: #fff;
}

.wizard-drag {
  width: 7px;
  height: 9px;
  margin-left: 2px;
}

.wizard-ring {
  width: 14px;
  height: 14px;
  margin-left: 22px;
}

.wizard-title {
  flex: 1;
  margin: -1px 0 0 9px;
  font-size: 15px;
  font-weight: bold;
}

.wizard-tool {
  width: 14px;
  height: 14px;
  margin-right: 12px;
}

.wizard-tool:last-child {
  margin-right: 5px;
}

.wizard h3 {
  margin: 14px 0 0;
  font-size: 13px;
  line-height: 16px;
  color: #eee;
}

.wizard-text {
  margin: 2px 0 0;
  font-size: 11px;
  line-height: 14px;
}

.wizard-count {
  display: flex;
  justify-content: flex-end;
  margin-top: 2px;
}

.wizard-count b {
  width: 37px;
  height: 18px;
  border-radius: 6px;
  background-color: #3a3a3a;
  color: #eee;
  font-size: 9px;
  line-height: 18px;
  text-align: center;
}

.wizard-track {
  height: 3px;
  margin-top: 7px;
  background-color: #1e1e1e;
}

.wizard-fill {
  width: 40px;
  height: 100%;
  background-color: #8ecc00;
}

.wizard-action {
  display: flex;
  justify-content: flex-end;
  margin-top: 8px;
}

.btn-continue {
  width: 66px;
  height: 30px;
  border: none;
  border-radius: 2px;
  background-color: #3858e9;
  color: #fff;
  font-family: inherit;
  font-size: 11px;
}

.wizard-links {
  display: flex;
  gap: 15px;
  margin-top: 6px;
  font-size: 10px;
  line-height: 13px;
}

.wizard-links a {
  border-bottom: 1px solid #ddd;
}
```
